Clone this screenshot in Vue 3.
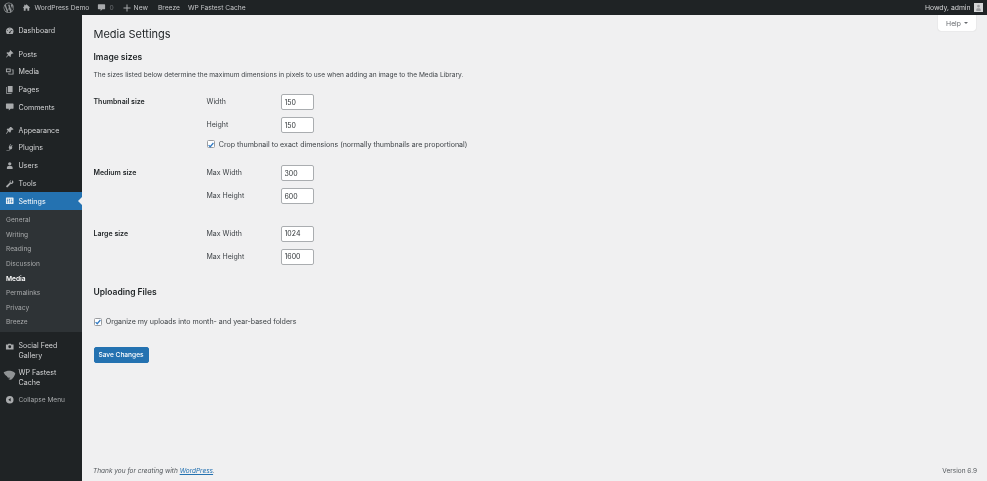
<script setup>
const icons = {
  dashboard: 'M10 3a8 8 0 0 0-7 12l1 2h12l1-2a8 8 0 0 0-7-12zM10 5a1 1 0 1 1 0 2 1 1 0 0 1 0-2zM5.500 8.500a1 1 0 1 1 0 2 1 1 0 0 1 0-2zM14.500 8.500a1 1 0 1 1 0 2 1 1 0 0 1 0-2zM13 8.500l.8.4L11.300 13a1.500 1.500 0 1 1-1.100-.8z',
  posts: 'M11 2l7 7-2 1-1-.5-3 3 .5 3-1.500 1.500-3.500-3.500L3 18l-1-.5 4.500-5.500L3 8.500 4.500 7l3 .5 3-3L10 3.500z',
  media: 'M2 3h10v8H2zM4 5v4h6V5zM14 5h4v11H7v-3h2v1h7V7h-2z',
  pages: 'M6 2h10v13H6zM4 4v13h10v1.500H2.500V4z',
  comments: 'M3 3h14a1 1 0 0 1 1 1v9a1 1 0 0 1-1 1h-5l-4 4v-4H3a1 1 0 0 1-1-1V4a1 1 0 0 1 1-1z',
  appearance: 'M13 2l5 5-2 1.500-1-1-3 3 .5 1.500-2 2L7.500 11 3 17l-1-.5L6 10 3.500 7.500l2-2 2 .5 3-3-.5-1z',
  plugins: 'M11 2l1.500 1-2 3.500 2 1L14.500 4l1.500 1-2 3.500 1.500 1-1 2.500c-.8 1.500-2.500 2-4 1.500L9 16.500H3v-1h5.500l1-3c-1.500-1-2-3-1.200-4.500L11 2z',
  users: 'M10 2.500a3.500 3.500 0 1 1 0 7 3.500 3.500 0 0 1 0-7zM4 17v-3c0-2 1.500-3.500 3-3.500h6c1.500 0 3 1.500 3 3.500v3z',
  tools: 'M15 2.500a4.500 4.500 0 0 1 2.500 5.500 4 4 0 0 1-5 2L6 17a2 2 0 0 1-3-3l7-6.500a4 4 0 0 1 2-5l1 .1-2 2.400 1 2.500 2.500.5z',
  settings: 'M3 3h14a1 1 0 0 1 1 1v12a1 1 0 0 1-1 1H3a1 1 0 0 1-1-1V4a1 1 0 0 1 1-1zM5 6v3H4v1h1v5h1v-5h1V9H6V6zM13 6v5h-1v1h1v3h1v-3h2v-1h-2V6zM9 6v1H8v1h1v7h1V8h1V7h-1V6z',
  social: 'M2 5h4l1-1.500h5L13 5h5v11H2zM10 7a3 3 0 1 0 0 6 3 3 0 0 0 0-6z',
  cheetah: 'M1 5c3-2 8-3 12-2 3 .6 5 2 6 4-1 3-3 7-6 9-2 1-4 0-5-1 2 0 3-1 3-2-2 1-4 0-5-2-2-1-4-3-5-6z'
}
const topMenu = [
  { name: 'Dashboard', icon: 'dashboard', gapAfter: true },
  { name: 'Posts', icon: 'posts' },
  { name: 'Media', icon: 'media' },
  { name: 'Pages', icon: 'pages' },
  { name: 'Comments', icon: 'comments', gapAfter: true },
  { name: 'Appearance', icon: 'appearance' },
  { name: 'Plugins', icon: 'plugins' },
  { name: 'Users', icon: 'users' },
  { name: 'Tools', icon: 'tools' }
]
const submenu = ['General', 'Writing', 'Reading', 'Discussion', 'Media', 'Permalinks', 'Privacy', 'Breeze']
const groups = [
  { title: 'Thumbnail size', cls: 'g-thumb', rows: [['Width', 150], ['Height', 150]], crop: true },
  { title: 'Medium size', cls: 'g-medium', rows: [['Max Width', 300], ['Max Height', 600]] },
  { title: 'Large size', cls: 'g-large', rows: [['Max Width', 1024], ['Max Height', 1600]] }
]
</script>

<template>
  <div class="page">
    <header class="bar">
      <div class="bar-left">
        <svg class="wp" viewBox="0 0 20 20"><path d="M10 1a9 9 0 1 0 0 18 9 9 0 0 0 0-18zm0 1a8 8 0 0 1 5.400 2.100c-1.100 0-1.700 1-1.700 1.800 0 1 .6 1.600 1 2.500.4.700.7 1.600.7 2.800l-.9 3-2.900-8.600.9-.1V4.800l-4.400.1v.6l.9.1 1.200 3.400L8 13.800 5.200 5.500l.9-.1v-.6l-2.200.1A8 8 0 0 1 10 2zM2.800 6.500L6.700 17A8 8 0 0 1 2.800 6.500zM10.100 10.700l2.400 6.800A8 8 0 0 1 8 17.700zM16.900 6a8 8 0 0 1-2.800 10.900l2.400-7c.5-1.200.6-2.100.4-3.900z" /></svg>
        <span class="bar-item home"><svg class="bi" viewBox="0 0 20 20"><path d="M10 3l8 7-1 1-1-1v7h-4v-5H8v5H4v-7l-1 1-1-1 3-2.600V4h2v1.700z" /></svg>WordPress Demo</span>
        <span class="bar-item comments"><svg class="bi" viewBox="0 0 20 20"><path :d="icons.comments" /></svg><span class="zero">0</span></span>
        <span class="bar-item new"><svg class="bi plus" viewBox="0 0 20 20"><path d="M9 3h2v6h6v2h-6v6H9v-6H3V9h6z" /></svg>New</span>
        <span class="bar-item breeze">Breeze</span>
        <span class="bar-item cache">WP Fastest Cache</span>
      </div>
      <div class="howdy">Howdy, admin<span class="avatar"><svg viewBox="0 0 10 10"><path d="M5 2a1.500 1.500 0 1 1 0 3 1.500 1.500 0 0 1 0-3zM2.500 9V7.500C2.500 6.300 3.500 5.800 5 5.800s2.500.5 2.500 1.700V9z" /></svg></span></div>
    </header>

    <div class="main">
      <aside class="side">
        <nav class="menu">
          <a v-for="m in topMenu" :key="m.name" class="mi" :class="{ gap: m.gapAfter }">
            <svg class="ico" viewBox="0 0 20 20"><path :d="icons[m.icon]" fill-rule="evenodd" /></svg>{{ m.name }}
          </a>
          <a class="mi current">
            <svg class="ico" viewBox="0 0 20 20"><path :d="icons.settings" fill-rule="evenodd" /></svg>Settings
          </a>
          <div class="sub">
            <a v-for="s in submenu" :key="s" class="si" :class="{ on: s === 'Media' }">{{ s }}</a>
          </div>
          <a class="mi two first">
            <svg class="ico" viewBox="0 0 20 20"><path :d="icons.social" fill-rule="evenodd" /></svg><span>Social Feed<br />Gallery</span>
          </a>
          <a class="mi two second">
            <svg class="ico big" viewBox="0 0 20 20"><path :d="icons.cheetah" /></svg><span>WP Fastest<br />Cache</span>
          </a>
          <a class="mi collapse">
            <svg class="ico" viewBox="0 0 20 20"><path d="M10 2a8 8 0 1 0 0 16 8 8 0 0 0 0-16zm2 4.500v7L7 10z" fill-rule="evenodd" /></svg>Collapse Menu
          </a>
        </nav>
      </aside>

      <main class="content">
        <button class="help">Help <i class="caret"></i></button>
        <h1>Media Settings</h1>
        <h2 class="h-image">Image sizes</h2>
        <p class="desc">The sizes listed below determine the maximum dimensions in pixels to use when adding an image to the Media Library.</p>

        <section v-for="g in groups" :key="g.title" class="group" :class="g.cls">
          <div class="g-title">{{ g.title }}</div>
          <div class="g-fields">
            <div v-for="r in g.rows" :key="r[0]" class="field">
              <label>{{ r[0] }}</label>
              <input type="text" :value="r[1]" />
            </div>
            <label v-if="g.crop" class="check crop"><span class="cb"><svg viewBox="0 0 10 10"><path d="M2 5.200l2 2 4-4.700" /></svg></span>Crop thumbnail to exact dimensions (normally thumbnails are proportional)</label>
          </div>
        </section>

        <h2 class="h-upload">Uploading Files</h2>
        <label class="check organize"><span class="cb"><svg viewBox="0 0 10 10"><path d="M2 5.200l2 2 4-4.700" /></svg></span>Organize my uploads into month- and year-based folders</label>
        <button class="save">Save Changes</button>

        <footer class="foot">
          <span class="thanks">Thank you for creating with <a>WordPress</a>.</span>
          <span>Version 6.9</span>
        </footer>
      </main>
    </div>
  </div>
</template>

<style>
html, body { margin: 0; height: 100%; background: #f0f0f1; overflow: hidden; }
</style>

<style scoped>
.page { width: 987px; height: 481px; display: flex; flex-direction: column; font-family: Inter, "Liberation Sans", sans-serif; font-size: 7px; color: #3c434a; filter: blur(0.65px) grayscale(0.35); }
.bar { height: 15px; flex: none; background: #1d2327; color: #c3c4c7; display: flex; justify-content: space-between; align-items: center; padding: 0 4.500px 0 3px; }
.bar-left { display: flex; align-items: center; }
.wp { width: 11.500px; height: 11.500px; fill: #8f9396; }
.bar-item { display: flex; align-items: center; font-size: 6.700px; }
.bi { width: 9px; height: 9px; fill: #a7aaad; margin-right: 3.500px; }
.home { margin-left: 7.500px; }
.comments { margin-left: 7.500px; }
.zero { color: #6d7277; }
.new { margin-left: 8px; }
.new .bi { width: 10px; height: 10px; margin-right: 2px; }
.breeze { margin-left: 10px; }
.cache { margin-left: 8px; }
.howdy { display: flex; align-items: center; gap: 3px; font-size: 6.800px; color: #d5d6d8; }
.avatar { width: 9px; height: 9px; background: #d5d6d8; display: block; }
.avatar svg { display: block; fill: #9a9da0; }

.main { flex: 1; display: flex; min-height: 0; }
.side { width: 82px; flex: none; background: #1d2327; }
.menu { display: flex; flex-direction: column; padding-top: 7px; }
.mi { height: 17.700px; display: flex; align-items: center; font-size: 7.100px; color: #d2d3d5; padding-left: 5px; box-sizing: border-box; }
.ico { width: 9.500px; height: 9.500px; fill: #a7aaad; margin-right: 4px; flex: none; }
.mi.gap { margin-bottom: 5.500px; }
.mi.current { background: #0078da; color: #fff; position: relative; }
.mi.current .ico { fill: #e8f0f7; }
.mi.current::after { content: ""; position: absolute; right: 0; top: 5px; border: 4px solid transparent; border-right-color: #f0f0f1; border-left: 0; }
.sub { background: #2c3338; padding: 3px 0 2px; display: flex; flex-direction: column; }
.si { height: 14.600px; display: flex; align-items: center; padding-left: 6px; font-size: 6.600px; color: #a7aaad; }
.si.on { color: #fff; font-weight: 600; }
.mi.two { height: auto; line-height: 10px; align-items: flex-start; }
.mi.two .ico { margin-top: 1px; }
.mi.two.first { margin-top: 9px; margin-bottom: 7.500px; }
.mi.two.second { line-height: 9.500px; }
.ico.big { width: 13px; height: 13px; margin-left: -2px; margin-right: 2.500px; fill: #8f9396; }
.mi.collapse { color: #a7aaad; font-size: 6.600px; margin-top: 4px; }
.mi.collapse .ico { fill: #a7aaad; }

.content { flex: 1; position: relative; padding: 0 10px 0 11.500px; min-width: 0; }
.help { position: absolute; right: 11px; top: 0; width: 38px; height: 16px; background: #fff; border: 0; border-radius: 0 0 3px 3px; box-shadow: 0 0 1px rgba(0,0,0,.25); font: inherit; font-size: 6.800px; color: #646970; padding: 0; display: flex; align-items: center; justify-content: center; gap: 3px; }
.caret { border: 2px solid transparent; border-top: 2.500px solid #646970; border-bottom: 0; }
h1 { margin: 0; padding-top: 12px; font-size: 11px; line-height: 14px; font-weight: 400; color: #1d2327; }
h2 { margin: 0; font-size: 8.500px; line-height: 11px; font-weight: 600; color: #1d2327; }
.h-image { margin-top: 11px; }
.desc { margin: 6.500px 0 0; font-size: 6.600px; line-height: 10px; color: #3c434a; }
.group { display: flex; }
.g-thumb { margin-top: 14.500px; }
.g-medium { margin-top: 16px; }
.g-large { margin-top: 21.500px; }
.g-title { width: 113px; flex: none; font-size: 7px; font-weight: 600; color: #1d2327; line-height: 16px; }
.g-fields { display: flex; flex-direction: column; gap: 7px; }
.field { display: flex; align-items: center; height: 16px; }
.field label { width: 74px; padding-bottom: 1px; font-size: 7px; color: #3c434a; }
input { width: 33px; height: 16px; box-sizing: border-box; border: 1px solid #a9adb2; border-radius: 2px; background: #fff; font: inherit; font-size: 7px; color: #2c3338; padding: 0 3px; margin: 0; outline: 0; }
.check { display: flex; align-items: center; gap: 4.300px; font-size: 7.050px; color: #3c434a; }
.crop { margin-top: -1px; height: 10px; }
.cb { width: 8px; height: 8px; box-sizing: border-box; border: .5px solid #9a9da2; border-radius: 1.500px; background: #fff; display: block; flex: none; }
.cb svg { display: block; width: 8px; height: 8px; margin: -.5px; fill: none; stroke: #0f7ff0; stroke-width: 1.500; }
.h-upload { margin-top: 22px; }
.organize { margin-top: 19px; height: 10px; }
.save { display: block; margin-top: 20px; width: 55px; height: 16px; border: 1px solid #0078da; border-radius: 2px; background: #0078da; color: #fff; font: inherit; font-size: 6.600px; font-weight: 500; padding: 0; }
.foot { position: absolute; left: 11px; right: 10px; bottom: 5px; display: flex; justify-content: space-between; font-size: 6.500px; line-height: 10px; color: #50575e; }
.thanks { font-style: italic; }
.thanks a { color: #0078da; text-decoration: underline; }
</style>
